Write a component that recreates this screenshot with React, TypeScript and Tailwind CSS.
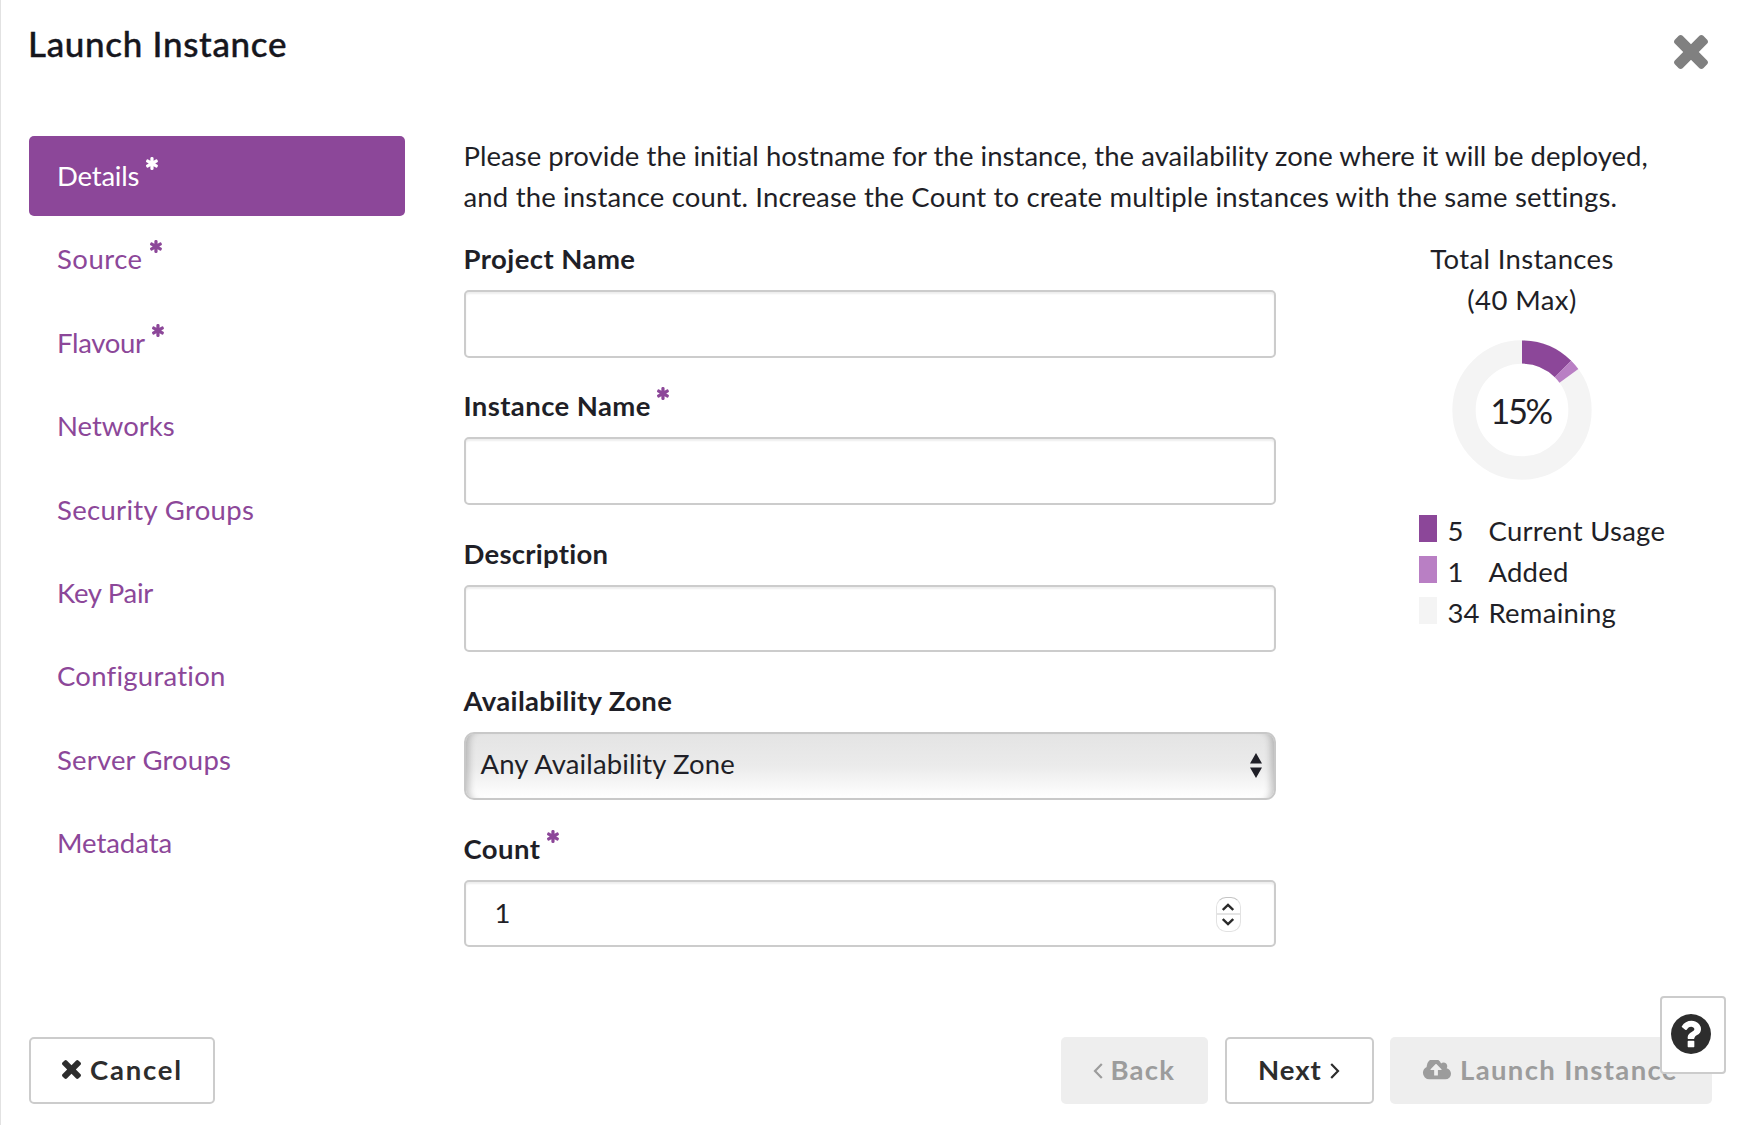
import React, { useState } from "react";

interface StepI {
    name: string;
    required?: boolean;
    tracking: string;
}

interface LegendI {
    value: number;
    label: string;
    color: string;
    tracking: string;
}

const steps: StepI[] = [
    { name: "Details", required: true, tracking: "tracking-[-0.2px]" },
    { name: "Source", required: true, tracking: "tracking-[0.5px]" },
    { name: "Flavour", required: true, tracking: "tracking-[-0.3px]" },
    { name: "Networks", tracking: "tracking-normal" },
    { name: "Security Groups", tracking: "tracking-[0.32px]" },
    { name: "Key Pair", tracking: "tracking-[-0.27px]" },
    { name: "Configuration", tracking: "tracking-[0.25px]" },
    { name: "Server Groups", tracking: "tracking-[0.18px]" },
    { name: "Metadata", tracking: "tracking-[-0.05px]" },
];

const legend: LegendI[] = [
    { value: 5, label: "Current Usage", color: "bg-[#8c4799]", tracking: "tracking-[0.27px]" },
    { value: 1, label: "Added", color: "bg-[#b97fc4]", tracking: "tracking-[0.2px]" },
    { value: 34, label: "Remaining", color: "bg-[#f4f4f4]", tracking: "tracking-[0.25px]" },
];

function Times({ className }: { className: string }) {
    return (
        <svg viewBox="302 366 1188 1188" fill="currentColor" className={className}>
            <path d="M1490 1322q0 40-28 68l-136 136q-28 28-68 28t-68-28l-294-294-294 294q-28 28-68 28t-68-28l-136-136q-28-28-28-68t28-68l294-294-294-294q-28-28-28-68t28-68l136-136q28-28 68-28t68 28l294 294 294-294q28-28 68-28t68 28l136 136q28 28 28 68t-28 68l-294 294 294 294q28 28 28 68z" />
        </svg>
    );
}

function Required({ className }: { className: string }) {
    return (
        <svg viewBox="0 0 1792 1792" fill="currentColor" className={"h-[15px] w-[15px] shrink-0 " + className}>
            <path d="M1482 1050q46 26 59.5 77.5t-12.5 97.5l-64 110q-26 46-77.5 59.5t-97.5-12.5l-266-153v307q0 52-38 90t-90 38h-128q-52 0-90-38t-38-90v-307l-266 153q-46 26-97.5 12.5t-77.5-59.5l-64-110q-26-46-12.5-97.5t59.5-77.5l266-154-266-154q-46-26-59.5-77.5t12.5-97.5l64-110q26-46 77.5-59.5t97.5 12.5l266 153v-307q0-52 38-90t90-38h128q52 0 90 38t38 90v307l266-153q46-26 97.5-12.5t77.5 59.5l64 110q26 46 12.5 97.5t-59.5 77.5l-266 154z" />
        </svg>
    );
}

function Label({ text, tracking, required }: { text: string; tracking: string; required?: boolean }) {
    return (
        <label className="mb-[11px] mt-px flex h-[41px] items-start font-bold">
            <span className={tracking}>{text}</span>
            {required && <Required className="ml-[5.5px] mt-px text-[#8c4799]" />}
        </label>
    );
}

const inputClass =
    "block h-[67.5px] w-full rounded-[5px] border-2 border-[#ccc] bg-white px-[29px] text-[27.5px] shadow-[inset_0_2px_2px_rgba(0,0,0,0.07)] outline-none";

function UsageChart() {
    return (
        <svg viewBox="-70 -70 140 140" className="mt-5 h-[140px] w-[140px]">
            <circle r="58" fill="none" stroke="#f4f4f4" strokeWidth="23.3" />
            {/* 5 of 40 used, 1 of 40 added */}
            <path d="M0 -69.6A69.6 69.6 0 0 1 49.2 -49.2L32.8 -32.8A46.4 46.4 0 0 0 0 -46.4Z" fill="#8c4799" />
            <path d="M49.2 -49.2A69.6 69.6 0 0 1 56.3 -40.9L37.5 -27.3A46.4 46.4 0 0 0 32.8 -32.8Z" fill="#b97fc4" />
            <text x="-1.5" y="13.5" textAnchor="middle" fontSize="34.5" letterSpacing="-2.4" fill="#1f1f27">15%</text>
        </svg>
    );
}

export default function LaunchInstance() {
    const [active, setActive] = useState<string>("Details");
    const [count, setCount] = useState<number>(1);

    return (
        <div className="flex h-[1125px] w-[1740px] flex-col border-l border-[#e2e2e2] bg-white pl-7 pr-[28.5px] font-['Lato',sans-serif] text-[27.5px] leading-[41px] text-[#1f1f27]">
            <header className="flex h-[136px] shrink-0 items-start justify-between">
                <h4 className="-ml-px mt-[22px] text-[35px] font-medium leading-[42px] tracking-[0.68px] text-[#16161d] [-webkit-text-stroke:0.4px]">Launch Instance</h4>
                <button className="mr-1 mt-[35px] text-[#808080]">
                    <Times className="h-[34px] w-[34px]" />
                </button>
            </header>

            <div className="flex flex-1">
                <nav className="flex w-[376px] shrink-0 flex-col gap-[3.4px]">
                    {steps.map((step) => (
                        <button
                            key={step.name}
                            onClick={() => setActive(step.name)}
                            className={
                                "flex h-[80px] items-start rounded-[5px] pl-7 pt-[19px] text-left " +
                                (step.name === active ? "bg-[#8c4799] text-white" : "text-[#8c4799]")
                            }
                        >
                            <span className={step.tracking}>{step.name}</span>
                            {step.required && <Required className="ml-1.5 mt-px" />}
                        </button>
                    ))}
                </nav>

                <main className="ml-[58.5px] flex-1">
                    <p className="-mt-px whitespace-nowrap">
                        <span className="block tracking-[0.04px]">
                            Please provide the initial hostname for the instance, the availability zone where it will be deployed,
                        </span>
                        <span className="block tracking-[0.17px]">
                            and the instance count. Increase the Count to create multiple instances with the same settings.
                        </span>
                    </p>

                    <div className="mt-5 flex">
                        <form className="flex w-[812px] flex-col gap-[26.9px]">
                            <div>
                                <Label text="Project Name" tracking="tracking-[0.43px]" />
                                <input className={inputClass} />
                            </div>
                            <div>
                                <Label text="Instance Name" tracking="tracking-[0.4px]" required />
                                <input className={inputClass} />
                            </div>
                            <div>
                                <Label text="Description" tracking="tracking-[0.25px]" />
                                <input className={inputClass} />
                            </div>
                            <div>
                                <Label text="Availability Zone" tracking="tracking-[0.33px]" />
                                <div className="flex h-[67.5px] items-center justify-between rounded-[10px] border-2 border-[#c8c8c8] bg-linear-to-b from-[#e4e4e4] via-[#ebebeb] to-white pl-[15px] pr-3 shadow-[inset_9px_0_7px_-6px_rgba(0,0,0,0.22),inset_-9px_0_7px_-6px_rgba(0,0,0,0.22)]">
                                    <span className="-mt-[5px] tracking-[0.12px]">Any Availability Zone</span>
                                    <svg viewBox="0 0 12 25" fill="currentColor" className="h-[25px] w-[12px]">
                                        <path d="M6 0L12 10.5H0ZM6 25L0 14.5H12Z" />
                                    </svg>
                                </div>
                            </div>
                            <div>
                                <Label text="Count" tracking="tracking-[0.4px]" required />
                                <div className={inputClass + " flex items-center justify-between"}>
                                    <span className="-mt-0.5">{count}</span>
                                    <div className="mr-1 mt-0.5 flex h-[35px] w-[25px] flex-col overflow-hidden rounded-[10px] border border-[#e2e2e2] border-t-[#c4c4c4] text-[#2a2a2a]">
                                        <button type="button" onClick={() => setCount(count + 1)} className="flex flex-1 items-center justify-center border-b-2 border-[#e4e4e4]">
                                            <svg viewBox="0 0 12 8" fill="none" stroke="currentColor" strokeWidth="2.4" className="mt-0.5 h-2 w-3">
                                                <path d="M0.8 7L6 2L11.2 7" />
                                            </svg>
                                        </button>
                                        <button type="button" onClick={() => setCount(Math.max(1, count - 1))} className="flex flex-1 items-center justify-center">
                                            <svg viewBox="0 0 12 8" fill="none" stroke="currentColor" strokeWidth="2.4" className="mb-0.5 h-2 w-3">
                                                <path d="M0.8 1L6 6L11.2 1" />
                                            </svg>
                                        </button>
                                    </div>
                                </div>
                            </div>
                        </form>

                        <aside className="ml-[143px] mt-px flex w-[207px] flex-col items-center">
                            <span className="tracking-[0.34px]">Total Instances</span>
                            <span className="tracking-[0.4px]">(40 Max)</span>
                            <UsageChart />
                            <ul className="mt-[29.5px] w-[250px] self-start">
                                {legend.map((item) => (
                                    <li key={item.label} className="flex items-start">
                                        <i className={"mt-[5px] h-[27px] w-[18px] " + item.color}></i>
                                        <span className="ml-[11px] w-[41px]">{item.value}</span>
                                        <span className={item.tracking}>{item.label}</span>
                                    </li>
                                ))}
                            </ul>
                        </aside>
                    </div>
                </main>
            </div>

            <footer className="mb-[21px] flex h-[67.5px] shrink-0 font-bold text-[#2d2d2d]">
                <button className="flex w-[186px] items-center rounded-[5px] border-2 border-[#ccc] pb-px pl-[31px]">
                    <Times className="h-[19px] w-[19px]" />
                    <span className="ml-[9px] tracking-[1.8px]">Cancel</span>
                </button>
                <button disabled className="ml-auto flex w-[147.5px] items-center rounded-[5px] bg-[#eee] pb-px pl-[32px] text-[#9c9c9c]">
                    <svg viewBox="0 0 10 16" fill="none" stroke="currentColor" strokeWidth="2.2" className="mt-0.5 h-4 w-2.5">
                        <path d="M8.8 1L2 8L8.8 15" />
                    </svg>
                    <span className="ml-[8px] tracking-[1.2px]">Back</span>
                </button>
                <button className="ml-[17px] flex w-[149px] items-center rounded-[5px] border-2 border-[#ccc] pb-px pl-[31px]">
                    <span className="tracking-[0.97px]">Next</span>
                    <svg viewBox="0 0 10 16" fill="none" stroke="currentColor" strokeWidth="2.2" className="ml-[8px] mt-0.5 h-4 w-2.5">
                        <path d="M1.2 1L8 8L1.2 15" />
                    </svg>
                </button>
                <button disabled className="relative ml-[16px] flex w-[321.5px] items-center rounded-[5px] bg-[#eee] pb-px pl-[32px] text-[#9c9c9c]">
                    <svg viewBox="0 256 1984 1280" fill="currentColor" className="h-[20px] w-[29px]">
                        <path d="M1344 864q0-14-9-23l-352-352q-9-9-23-9t-23 9l-351 351q-10 12-10 24 0 14 9 23t23 9h224v352q0 13 9.5 22.5t22.5 9.5h192q13 0 22.5-9.5t9.5-22.5v-352h224q13 0 22.5-9.5t9.5-22.5zm640 288q0 159-112.5 271.5t-271.5 112.5h-1088q-185 0-316.5-131.5t-131.5-316.5q0-130 70-240t188-165q-2-30-2-43 0-212 150-362t362-150q156 0 285.5 87t188.5 231q71-62 166-62 106 0 181 75t75 181q0 76-41 138 130 31 213.5 135.5t83.5 238.5z" />
                    </svg>
                    <span className="ml-[9px] whitespace-nowrap tracking-[1.35px]">Launch Instance</span>
                    {/* help button floats over the footer corner */}
                    <span className="absolute -right-[14px] -top-[41px] flex h-[78px] w-[66px] items-center justify-center rounded-[4px] border-2 border-[#ccc] bg-white text-[#2d2d2d]">
                        <svg viewBox="128 128 1536 1536" fill="currentColor" className="-mt-0.5 mr-[3px] h-[40px] w-[40px]">
                            <path d="M1024 1376v-192q0-14-9-23t-23-9h-192q-14 0-23 9t-9 23v192q0 14 9 23t23 9h192q14 0 23-9t9-23zm256-672q0-88-55.5-163t-138.5-116-170-41q-243 0-371 213-15 24 8 42l132 100q7 6 19 6 16 0 25-12 53-68 86-92 34-24 86-24 48 0 85.5 26t37.5 59q0 38-20 61t-68 45q-63 28-115.5 86.5t-52.5 125.5v36q0 14 9 23t23 9h192q14 0 23-9t9-23q0-19 21.5-49.5t54.5-49.5q32-18 49-28.5t46-35 44.5-48 28-60.5 12.5-81zm384 192q0 209-103 385.5t-279.5 279.5-385.5 103-385.5-103-279.5-279.5-103-385.5 103-385.5 279.5-279.5 385.5-103 385.5 103 279.5 279.5 103 385.5z" />
                        </svg>
                    </span>
                </button>
            </footer>
        </div>
    );
}
